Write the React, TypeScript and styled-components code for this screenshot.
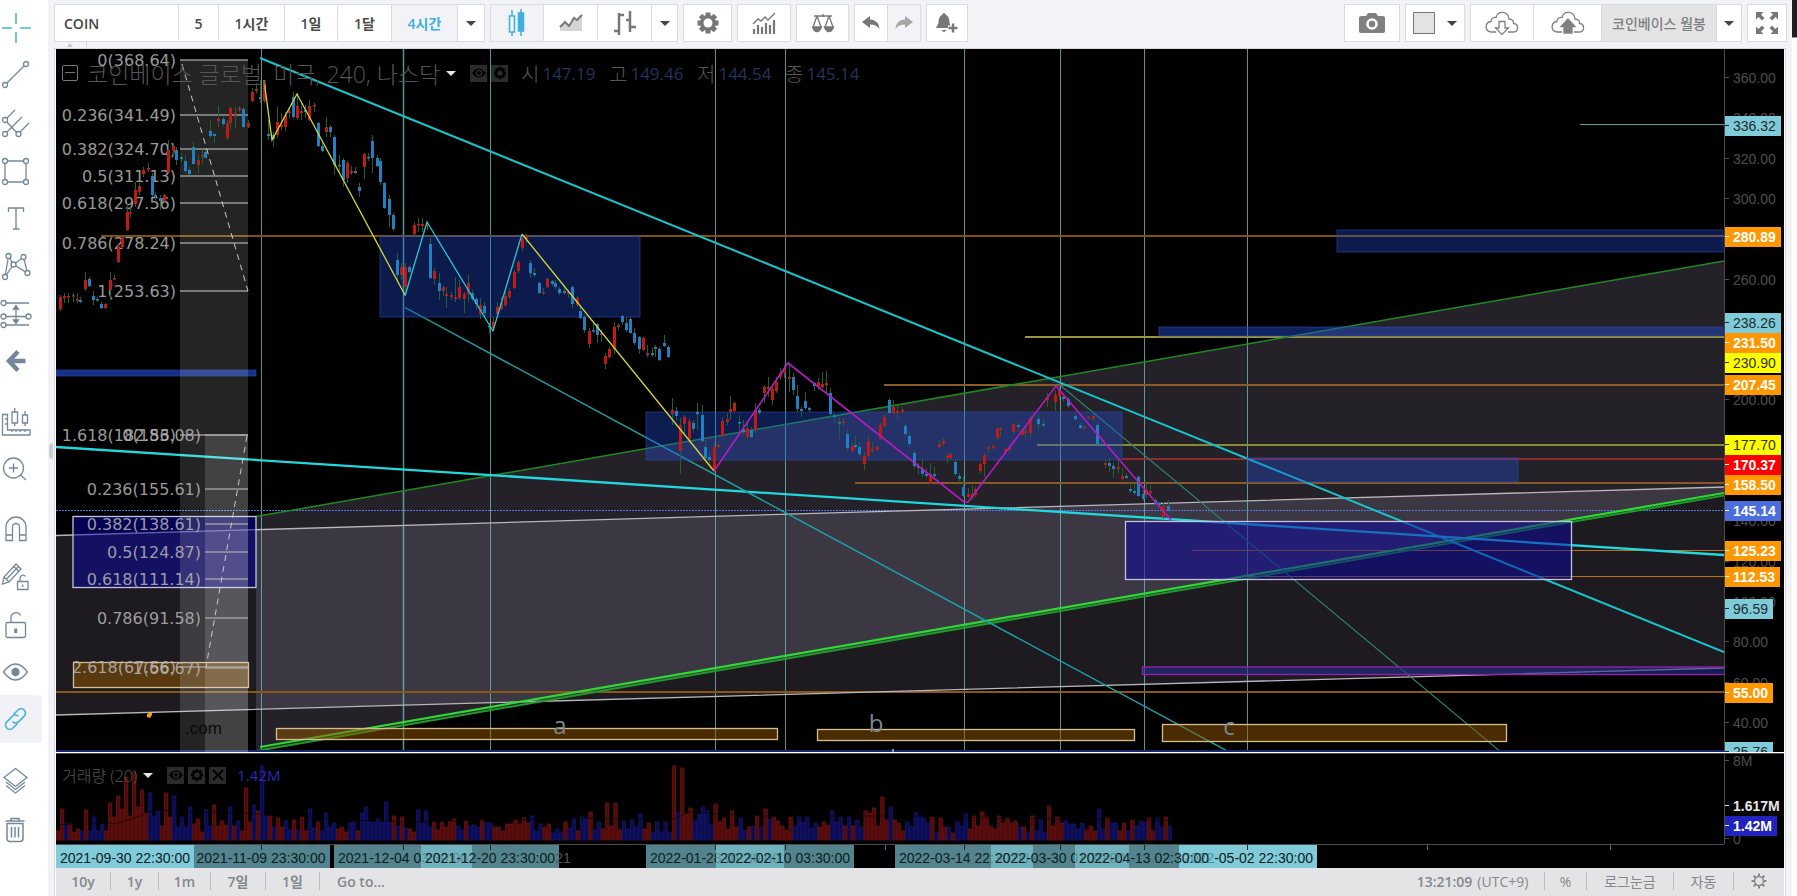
import React from "react";
import styled, { createGlobalStyle, css } from "styled-components";

const GlobalStyle = createGlobalStyle`
  *, *::before, *::after { box-sizing: border-box; }
  html, body, #root { height: 100%; }
  body {
    margin: 0;
    background: #f1f3f7;
    font-family: "Open Sans", "Noto Sans CJK KR", sans-serif;
    overflow: hidden;
  }
  button, input { font: inherit; color: inherit; margin: 0; }
`;

const Page = styled.div`
  display: flex;
  height: 100vh;
`;

/* ---------- left drawing tools ---------- */

const Sidebar = styled.nav`
  flex: none;
  width: 48px;
  padding-top: 4px;
  background: #fff;
  color: #74879a;
`;

const ToolGroup = styled.div<{ $height: number }>`
  display: flex;
  flex-direction: column;
  height: ${(p) => p.$height}px;
  & + & {
    margin-top: 13px;
    position: relative;
  }
  & + &::before {
    content: "";
    position: absolute;
    top: -7px;
    left: 0;
    width: 48px;
    height: 2px;
    background: #e3e8ee;
  }
`;

const ToolButton = styled.button<{ $active?: boolean; $blue?: boolean }>`
  flex: 1;
  display: flex;
  align-items: center;
  width: 42px;
  padding: 0;
  border: 0;
  border-radius: 0 3px 3px 0;
  background: ${(p) => (p.$active ? "#f0f2f5" : "transparent")};
  color: ${(p) => (p.$blue ? "#4cb4dc" : "inherit")};
  svg { display: block; width: 32px; height: 32px; }
`;

/* ---------- top toolbar ---------- */

const Main = styled.main`
  flex: 1;
  min-width: 0;
  display: flex;
  flex-direction: column;
  padding-left: 6px;
`;

const Toolbar = styled.header`
  flex: none;
  display: flex;
  align-items: center;
  gap: 5px;
  height: 42px;
  padding: 4px 5px 0 0;
`;

const Group = styled.div`
  display: flex;
  height: 38px;
  border: 1px solid #d9dbdf;
  background: #fff;
`;

const Spacer = styled.div`
  flex: 1;
`;

const SymbolInput = styled.input`
  width: 123px;
  border: 0;
  outline: 0;
  padding: 0 9px;
  font-size: 14px;
  font-weight: 600;
  color: #444;
  background: transparent;
`;

const BarButton = styled.button<{ $w: number; $active?: boolean; $muted?: boolean; $first?: boolean }>`
  width: ${(p) => p.$w}px;
  display: flex;
  align-items: center;
  justify-content: center;
  gap: 12px;
  padding: 0;
  border: 0;
  border-left: ${(p) => (p.$first ? 0 : "1px solid #d9dbdf")};
  background: ${(p) => (p.$muted ? "#e4e4e4" : p.$active ? "#f1f3f6" : "#fff")};
  color: ${(p) => (p.$active ? "#3faee0" : p.$muted ? "#808080" : "#4a4a4a")};
  font-size: 14px;
  font-weight: ${(p) => (p.$muted ? 500 : 600)};
  white-space: nowrap;
  svg { display: block; }
`;

const Caret = styled.span<{ $light?: boolean }>`
  width: 0;
  height: 0;
  border: 5px solid transparent;
  border-top-color: ${(p) => (p.$light ? "#e6e6e6" : "#444")};
  border-bottom: 0;
`;

const Swatch = styled.span`
  width: 22px;
  height: 22px;
  border: 1px solid #777;
  background: #e3e3e3;
`;

const Shelf = styled.div`
  flex: none;
  height: 7px;
  margin-right: 6px;
  border-bottom: 1px solid #d5d9de;
`;

const ShelfTab = styled.button`
  display: flex;
  align-items: center;
  justify-content: center;
  width: 33px;
  height: 6px;
  padding: 0;
  border: 0;
  border-right: 1px solid #d5d9de;
  background: transparent;
  &::before {
    content: "";
    border: 3px solid transparent;
    border-bottom: 4px solid #c5c8cc;
    border-top: 0;
  }
`;

/* ---------- chart ---------- */

const ChartFrame = styled.section`
  position: relative;
  flex: 1;
  min-height: 0;
  display: flex;
  flex-direction: column;
  margin-right: 6px;
  padding: 0 1px;
  border-left: 1px solid #d5d9de;
  border-right: 1px solid #d5d9de;
  background: #fff;
`;

const CollapseHandle = styled.button`
  position: absolute;
  left: -6px;
  top: 394px;
  width: 4px;
  height: 16px;
  padding: 0;
  border: 0;
  border-radius: 4px 0 0 4px;
  background: #c9ccd1;
`;

const PaneRow = styled.div<{ $height?: number }>`
  display: flex;
  min-height: 0;
  flex: ${(p) => (p.$height ? `0 0 ${p.$height}px` : "1 1 0")};
  background: #000;
`;

const Plot = styled.div`
  position: relative;
  flex: 1;
  min-width: 0;
  overflow: hidden;
  > svg { display: block; width: 100%; height: 100%; }
`;

const Divider = styled.div`
  flex: none;
  height: 2px;
  background: #fff;
  border-bottom: 1px solid #4c4c50;
`;

const Axis = styled.div`
  position: relative;
  flex: none;
  width: 60px;
  overflow: hidden;
  border-left: 1px solid #4a4a4a;
  font-family: "Liberation Sans", sans-serif;
  font-size: 14px;
  line-height: 20px;
`;

const AxisCorner = styled.div`
  flex: none;
  width: 60px;
`;

const AxisLabel = styled.div<{ $bg?: string; $fg: string; $bold?: boolean }>`
  position: absolute;
  left: -1px;
  height: 20px;
  margin-top: -10px;
  padding: 0 5px 0 9px;
  background: ${(p) => p.$bg || "transparent"};
  color: ${(p) => p.$fg};
  font-weight: ${(p) => (p.$bold ? 700 : 400)};
  &::before {
    content: "";
    position: absolute;
    left: 0;
    top: 9px;
    width: 5px;
    height: 1px;
    background: currentColor;
  }
`;

const Legend = styled.div<{ $top: number; $left: number }>`
  position: absolute;
  top: ${(p) => p.$top}px;
  left: ${(p) => p.$left}px;
  display: flex;
  align-items: center;
  height: 30px;
  white-space: nowrap;
  color: #565656;
`;

const CollapseBox = styled.button`
  position: relative;
  width: 16px;
  height: 16px;
  margin-right: 9px;
  padding: 0;
  border: 1px solid #777;
  border-radius: 2px;
  background: transparent;
  &::before {
    content: "";
    position: absolute;
    left: 2px;
    right: 2px;
    top: 6px;
    height: 1px;
    background: #777;
  }
`;

const LegendTitle = styled.span<{ $size: number }>`
  font-size: ${(p) => p.$size}px;
  font-weight: 300;
  margin-right: 6px;
`;

const LegendButton = styled.button`
  display: grid;
  place-items: center;
  width: 17px;
  height: 17px;
  margin-right: 4px;
  padding: 0;
  border: 0;
  background: #2b2b2b;
  color: #000;
`;

const LegendIcons = styled.div`
  display: flex;
  margin-left: 14px;
`;

const Quote = styled.span`
  display: flex;
  align-items: center;
  width: 88px;
  font-size: 20px;
  font-weight: 300;
  b {
    margin-left: 3px;
    font-size: 17px;
    font-weight: 400;
    color: #20345c;
  }
`;

const VolumeValue = styled.span`
  margin-left: 7px;
  font-size: 15px;
  color: #2a2ab4;
`;

const TimeTag = styled.span<{ $solid?: boolean }>`
  position: absolute;
  top: 0;
  width: 138px;
  height: 24px;
  transform: translateX(-50%);
  background: ${(p) => (p.$solid ? "#80cbd9" : "rgba(128, 203, 217, 0.65)")};
  color: #0b1c20;
  font-family: "Liberation Sans", sans-serif;
  font-size: 14px;
  line-height: 26px;
  text-align: center;
  white-space: nowrap;
`;

const TimeNote = styled(TimeTag)`
  width: auto;
  background: none;
  color: #555;
`;

const TimeTick = styled.i<{ $dark?: boolean }>`
  position: absolute;
  top: 0;
  width: 1px;
  height: 5px;
  background: ${(p) => (p.$dark ? "#12292c" : "#666")};
`;

const AxisRule = styled.div`
  flex: 1;
  position: relative;
  overflow: hidden;
  border-top: 1px solid #4d4d4d;
`;

/* ---------- footer ---------- */

const Footer = styled.footer`
  flex: none;
  display: flex;
  align-items: center;
  height: 28px;
  padding-bottom: 2px;
  background: #e4e4e6;
  color: #85888e;
  font-size: 14px;
`;

const FooterButton = styled.button<{ $w: number; $plain?: boolean; $last?: boolean }>`
  width: ${(p) => p.$w}px;
  height: 18px;
  padding: 0;
  display: flex;
  align-items: center;
  justify-content: center;
  gap: 5px;
  border: 0;
  background: transparent;
  white-space: nowrap;
  font-weight: ${(p) => (p.$plain ? 400 : 600)};
  ${(p) => !p.$last && css`border-right: 1px solid #b9bbc0;`}
  span { font-weight: 400; }
`;

/* the neighbouring panel that peeks in on the right */
const EdgeStrip = styled.aside`
  flex: none;
  width: 5px;
  background: #fff;
  &::before {
    content: "";
    display: block;
    height: 38px;
    background: #1d1f22;
    border-bottom: 1px solid #999;
  }
`;

/* ---------- data ---------- */

const CANDLES = `
60 295 297 309 311 r;64 293 296 298 303 r;68 293 296 297 303 r;73 293 295 296 302 r;77 293 299 301 303 r;80 297 300 302 303 b;
85 272 280 289 291 r;89 277 279 286 287 b;93 291 296 300 305 b;97 297 299 300 302 b;101 302 304 308 309 b;105 303 304 308 309 r;
110 272 280 290 300 r;114 275 278 279 280 r;118 244 246 262 263 r;122 235 237 247 248 r;127 203 212 230 231 r;130 207 212 213 217 r;
135 182 190 204 207 r;139 183 186 192 195 r;143 167 170 174 177 r;148 163 168 170 172 r;152 173 176 195 197 b;155 192 195 197 202 b;
160 195 198 201 210 b;164 194 195 201 203 r;168 140 150 173 174 r;173 143 146 151 155 r;176 147 150 160 165 b;181 153 157 159 162 b;
185 155 161 171 173 b;189 167 170 174 175 b;193 142 147 164 165 b;198 155 160 165 173 r;202 150 155 156 164 r;205 150 152 158 158 b;
210 120 131 136 138 b;214 133 134 136 143 b;218 106 119 121 127 r;223 117 119 124 126 b;227 120 123 138 140 r;230 107 108 123 129 r;
235 107 113 114 128 r;239 106 108 110 112 r;243 107 109 127 128 b;248 120 123 127 128 r;252 88 92 101 102 r;256 83 89 91 93 r;
260 80 97 99 103 b;264 80 82 101 103 r;268 120 134 136 140 b;273 132 135 139 147 b;277 107 122 135 138 r;281 113 125 127 130 r;
285 112 115 127 131 r;289 107 111 113 118 r;293 92 97 117 118 b;297 93 106 118 120 r;301 103 111 113 120 r;305 105 110 112 118 b;
309 100 106 120 121 r;314 103 105 106 112 r;318 122 123 146 147 b;322 140 146 151 152 b;326 117 127 132 137 r;330 125 127 132 137 b;
334 135 137 165 175 b;339 155 165 166 173 b;343 158 160 180 187 b;347 161 163 178 183 r;351 166 171 173 175 r;355 167 171 173 174 b;
359 183 187 191 197 b;364 153 154 167 179 r;368 153 157 158 161 b;372 135 141 158 173 b;377 155 158 166 167 b;380 158 161 182 185 b;
384 182 183 208 209 b;389 195 199 215 227 b;393 213 215 229 231 b;397 253 260 275 280 b;401 263 267 275 280 r;405 263 267 287 292 r;
409 265 267 272 273 b;414 222 225 234 237 r;418 218 224 225 232 r;422 218 224 226 232 r;427 222 224 226 230 r;430 238 244 278 279 b;
434 268 271 279 285 r;439 273 283 291 300 b;443 285 287 291 296 r;446 287 294 296 308 r;451 292 295 297 300 r;455 277 297 299 302 r;
459 280 287 298 300 r;464 292 294 299 313 r;468 275 283 294 302 r;472 290 293 299 301 b;476 297 299 304 310 b;480 298 305 314 319 r;
484 302 306 313 317 b;489 323 326 327 334 b;493 317 322 328 330 r;497 302 307 314 316 r;501 297 303 309 310 r;505 292 296 305 307 r;
509 288 291 297 299 r;514 270 272 288 289 r;518 260 262 271 273 r;522 237 239 248 251 r;526 234 236 239 243 r;530 260 263 273 278 b;
534 268 273 275 277 b;539 282 283 293 294 b;543 288 292 293 295 r;547 278 279 287 288 r;552 280 281 284 286 b;555 280 283 287 289 b;
559 287 289 293 295 b;564 287 291 293 295 b;568 290 292 294 298 r;572 285 287 304 308 b;577 296 298 305 307 r;580 305 311 318 319 b;
584 315 317 330 333 b;589 328 331 344 348 r;593 323 330 331 333 b;597 323 324 335 343 b;601 330 333 335 342 r;605 353 356 364 369 r;
609 347 349 357 358 r;614 322 327 349 354 r;618 323 325 327 330 r;622 315 316 322 325 b;626 317 323 330 332 b;630 317 319 333 334 b;
634 328 333 343 345 b;639 336 337 349 354 b;643 337 338 350 351 r;647 345 353 355 357 r;652 348 353 355 357 b;655 345 347 349 357 b;
659 347 349 360 361 b;664 335 343 346 347 b;668 345 347 357 358 b;672 398 410 414 425 r;676 407 411 416 420 b;680 418 425 451 474 r;
684 415 417 424 433 r;689 418 421 439 443 r;693 420 423 429 433 b;697 403 412 414 430 b;702 405 415 441 443 b;705 440 447 458 460 b;
709 453 457 460 463 b;714 443 447 471 473 r;718 443 445 447 448 r;722 417 421 436 437 r;727 413 419 422 425 r;730 396 409 412 420 r;
734 402 403 411 413 r;739 415 422 423 432 b;743 420 429 432 435 b;747 422 428 437 439 r;751 427 430 437 438 b;755 403 410 430 433 r;
759 408 410 413 415 b;764 385 387 393 403 r;768 377 387 389 397 r;772 385 389 400 405 r;776 377 382 391 393 r;780 368 373 377 380 r;
784 365 369 373 378 r;789 363 377 379 392 r;793 373 377 390 395 b;797 385 396 409 412 b;801 407 409 411 417 b;805 392 401 408 410 b;
809 407 408 410 412 b;814 382 383 386 391 b;818 378 382 386 390 r;822 372 384 387 388 r;826 371 383 385 393 r;830 388 393 414 417 b;
834 413 415 417 422 b;839 417 422 423 439 b;843 418 421 423 427 r;847 430 434 448 452 b;852 442 446 451 453 r;855 435 445 447 449 b;
859 443 447 454 456 b;864 453 456 464 470 r;868 435 441 456 457 r;872 442 449 451 453 r;877 445 447 450 451 r;880 423 425 439 440 r;
884 415 417 426 427 r;889 398 400 413 414 b;893 400 407 413 414 r;897 405 411 413 419 r;902 407 410 412 413 r;905 423 426 434 436 b;
909 432 436 444 446 b;914 450 453 466 468 b;918 463 466 468 475 b;922 458 469 474 477 b;926 468 474 476 478 b;930 463 474 483 484 r;
934 467 474 476 477 b;939 440 444 447 448 r;943 438 441 444 446 r;947 453 456 458 463 r;950 453 454 458 460 r;955 460 462 474 476 b;
959 473 476 479 481 b;963 476 487 496 497 b;968 488 494 497 498 r;972 485 494 497 500 r;975 487 489 495 497 r;980 462 464 471 473 r;
984 453 455 464 477 r;988 445 447 449 453 r;993 444 446 448 450 r;997 426 429 438 440 r;1000 427 428 430 437 r;1005 447 449 452 452 r;
1009 445 447 450 453 r;1013 423 424 432 434 r;1018 422 425 427 432 b;1022 428 430 435 436 r;1025 425 431 433 438 r;1030 415 418 433 439 r;
1038 415 419 424 430 b;1043 418 424 425 427 b;1047 393 398 400 407 r;1055 390 395 402 411 r;1059 386 390 396 400 r;1063 395 397 399 401 b;
1068 397 399 406 408 b;1075 414 416 419 421 b;1080 423 425 428 429 b;1084 425 427 428 429 r;1088 416 417 418 419 r;1093 414 416 419 421 r;
1097 423 425 444 445 b;1101 440 444 445 447 b;1105 460 463 465 468 r;1109 458 463 466 472 b;1113 463 466 469 478 b;1118 460 467 469 473 r;
1122 468 476 479 481 r;1126 473 476 478 479 b;1130 483 489 491 493 b;1134 483 491 493 495 b;1138 475 477 496 497 b;1143 490 494 499 501 b;
1146 483 490 495 498 r;1150 485 491 493 495 r;1155 498 500 504 505 b;1159 502 503 505 507 b;1163 502 506 517 519 r;1168 500 506 511 512 b`
  .trim()
  .split(";")
  .map((row) => {
    const [x, high, top, bottom, low, tone] = row.trim().split(" ");
    return { x: +x, high: +high, top: +top, bottom: +bottom, low: +low, up: tone === "r" };
  });

const VOLUME_Q4 =
  "r9 r31 b16 r16 r8 r11 b9 r30 b9 b23 b9 b16 r9 r37 r23 r44 r31 r63 r24 r68 r33 r50 r27 b47 b24 b29 r14 r47 r23 b44 b13 b23 b13 b33 r16 r21 r8 b30 b14 r35 r14 r19 r15 b33 r14 b19 r9 r52 r18 b35 r29 b74 b24 r24 b13 r22 r13 b19 b10 r20 b10 r23 r9 b31 b12 r18 b9 b27 b13 b17 r11 r13 r8 b17 b18 r9 b27 b33 b18 b18 b21 b18 b38 b18 r24 b14 r23 b12 r11 r8 b30 b17 b29 b13 r18 r10 r18 r13 r19 r21 b14 b10 r19 b14 b15 b13".split(" ");

const VOLUME_Q1 =
  "r20 b17 b17 r13 r13 r9 r16 r16 r20 r16 r22 r17 b24 b9 b16 r13 r16 b7 b11 b8 r18 b12 b22 r9 b23 b22 r28 b10 b18 r11 r37 r14 r37 r10 b19 b11 b21 b13 b26 r11 r17 b8 b18 b8 b18 b8 r74 b27 r72 r26 r32 b19 b26 b33 b29 b16 r36 r18 r22 r11 r29 r13 b22 b10 r13 b14 r24 b13 r31 b21 r23 r19 r14 r10 r23 b14 b24 b18 b23 b12 b17 r13 r18 r15 b29 b18 b23 r14 b23 r14 b20 b13 r29 r27 r32 r14 r43 r20 b33 r20 r17 r9 b18 b14 b27 b24 b22 b17 r23 b8 r22 r13 b13 r7 b18 b14 b26 r11 r24 r14 r28 r23 r14 r11 r24 r17 r22 r17 r19 b13 r13 b8 r24 b9 b20 b8 r34 r14 r23 r17 b19 b16 b16 b11 b17 r10 r14 r9 b31 b11 r22 b17 b17 r9 r17 b9 r20 b14 b19 b18 r22 r9 b22 b13 r23 b14".split(" ");

type Bar = { x: number; h: number; up: boolean };
const spread = (list: string[], from: number, to: number): Bar[] =>
  list.map((v, i) => ({
    x: from + ((to - from) * i) / list.length,
    h: +v.slice(1),
    up: v[0] === "r",
  }));
const BARS = [...spread(VOLUME_Q4, 56, 480), ...spread(VOLUME_Q1, 480, 1172)];

const FIB_MAJOR: [string, number][] = [
  ["0(368.64)", 60], ["0.236(341.49)", 115], ["0.382(324.70)", 149], ["0.5(311.13)", 176],
  ["0.618(297.56)", 203], ["0.786(278.24)", 243], ["1(253.63)", 291], ["1.618(182.56)", 435], ["2.618(67.56)", 667],
];
const FIB_MINOR: [string, number][] = [
  ["0(183.08)", 435], ["0.236(155.61)", 489], ["0.382(138.61)", 524], ["0.5(124.87)", 552],
  ["0.618(111.14)", 579], ["0.786(91.58)", 618], ["1(66.67)", 668],
];

const VERTICALS = [261, 403, 490, 715, 785, 964, 1060, 1144, 1247];

const LEVELS: { x: number; y: number; color: string; w: number }[] = [
  { x: 1580, y: 124.5, color: "#5b9ca5", w: 1 },
  { x: 101, y: 236, color: "#80500f", w: 2 },
  { x: 1025, y: 337, color: "#9a943a", w: 2 },
  { x: 884, y: 385, color: "#8b5c26", w: 2 },
  { x: 1037, y: 445, color: "#8a8a35", w: 2 },
  { x: 1122, y: 459, color: "#8f2a30", w: 2 },
  { x: 855, y: 483, color: "#87592a", w: 2 },
  { x: 1192, y: 550.5, color: "#b8741a", w: 1 },
  { x: 1240, y: 576.5, color: "#b8741a", w: 1 },
  { x: 56, y: 692, color: "#8c5614", w: 2 },
];

/* x, y, width, height, opacity */
const NAVY_ZONES = [
  [56, 370, 200, 6, 0.6], [380, 236, 260, 81, 0.34], [646, 412, 476, 48, 0.36], [1337, 230, 386, 22, 0.34],
  [1159, 327, 564, 9, 0.44], [1247, 458, 271, 24, 0.34],
];

const BROWN_ZONES = [
  [73, 662, 175, 25], [276, 728, 501, 11], [817, 729, 317, 11], [1162, 724, 344, 17],
];

const PX_PER_UNIT = 2.0156;
const priceTop = (price: number) => Math.round(29 + (360 - price) * PX_PER_UNIT);
const GRID_PRICES = [360, 340, 320, 300, 280, 260, 240, 220, 200, 180, 160, 140, 120, 100, 80, 60, 40];

const ORANGE = "#ff9800";
const AQUA = "#80cbd9";
const TAGS: [number, string, string, boolean][] = [
  [336.32, AQUA, "#1c2b2e", false], [280.89, ORANGE, "#fff", true], [238.26, AQUA, "#1c2b2e", false],
  [231.5, ORANGE, "#fff", true], [230.9, "#ffff00", "#33330a", false], [207.45, ORANGE, "#fff", true],
  [177.7, "#ffff00", "#33330a", false], [170.37, "#ff0000", "#fff", true], [158.5, ORANGE, "#fff", true],
  [145.14, "#4a6ee0", "#fff", true], [125.23, ORANGE, "#fff", true], [112.53, ORANGE, "#fff", true],
  [96.59, AQUA, "#1c2b2e", false], [55, ORANGE, "#fff", true], [25.76, AQUA, "#1c2b2e", false],
];

/* neighbouring tags push each other down so that they never overlap */
let lastTop = -100;
const PLACED_TAGS = TAGS.map(([price, bg, fg, bold]) => {
  const top = Math.max(priceTop(price), lastTop + 20);
  lastTop = top;
  return { price, bg, fg, bold, top };
});

/* the solid end marks come first, so that the translucent ones lie over them */
const TIMES: [number, string, boolean][] = [
  [125, "2021-09-30 22:30:00", true], [1248, "2022-05-02 22:30:00", true],
  [261, "2021-11-09 23:30:00", false], [403, "2021-12-04 03:30:00", false],
  [490, "2021-12-20 23:30:00", false], [715, "2022-01-28 01:30:00", false], [785, "2022-02-10 03:30:00", false],
  [964, "2022-03-14 22:30:00", false], [1060, "2022-03-30 01:30:00", false], [1144, "2022-04-13 02:30:00", false],
];
const timeLeft = (x: number) => ({ left: `${((x - 56) / 1668) * 100}%` });

/* ---------- icons ---------- */

const Line = ({ children, width = 1.3 }: { children: React.ReactNode; width?: number }) => (
  <svg viewBox="0 0 32 32" fill="none" stroke="currentColor" strokeWidth={width} aria-hidden="true">{children}</svg>
);
const Dots = ({ at, r = 2.5 }: { at: [number, number][]; r?: number }) => (
  <>{at.map(([x, y]) => <circle key={`${x}-${y}`} cx={x} cy={y} r={r} fill="#fff" />)}</>
);

const GearShape = ({ size, color = "currentColor", hole }: { size: number; color?: string; hole: string }) => (
  <svg width={size} height={size} viewBox="0 0 24 24" aria-hidden="true">
    {[0, 45, 90, 135, 180, 225, 270, 315].map((a) => (
      <rect key={a} x="9.5" y="1.5" width="5" height="6" fill={color} transform={`rotate(${a} 12 12)`} />
    ))}
    <circle cx="12" cy="12" r="8" fill={color} />
    <circle cx="12" cy="12" r="4.500" fill={hole} />
  </svg>
);
const EyeShape = () => (
  <svg width="14" height="10" viewBox="0 0 14 10" aria-hidden="true">
    <path d="M0 5Q7-4 14 5Q7 14 0 5z" fill="#000" />
    <circle cx="7" cy="5" r="2.6" fill="none" stroke="#333" strokeWidth="1.2" />
  </svg>
);

const TOOLS: { label: string; icon: React.ReactNode; blue?: boolean; active?: boolean }[][] = [
  [
    { label: "Cross", blue: true, icon: <Line width={1.6}><path d="M16 1v11M16 20v11M2 16h10M20 16h11" /></Line> },
    { label: "Trend line", icon: <Line><path d="M6.5 24.5L24.5 6.5" /><Dots at={[[26, 5], [5, 26]]} /></Line> },
    { label: "Pitchfork", icon: <Line><path d="M6 12L15 3M6 26L22 10M19 26L29 16M6 14L17 26" /><Dots at={[[5, 13], [5, 27], [18.5, 27]]} /></Line> },
    { label: "Rectangle", icon: <Line><path d="M5 6H26V27H5z" /><Dots at={[[5, 6], [26, 6], [5, 27], [26, 27]]} /></Line> },
    { label: "Text", icon: <Line><path d="M8.5 10V6H23.500V10M16 6V27M13 27H19.500" /></Line> },
    { label: "Patterns", icon: <Line><path d="M5 27L8.500 6L13.500 14.500L23.500 7L27.500 23L13.500 14.500z" /><Dots at={[[8.5, 6], [23.5, 7], [13.5, 14.5], [5, 27], [27.5, 23]]} /></Line> },
    { label: "Forecast", icon: <Line><path d="M4 5H29M4 18.500H27M4 27H29M16 9V24" /><path d="M13.500 11L16 7.500L18.500 11zM13.500 22L16 25.500L18.500 22z" fill="currentColor" /><Dots at={[[3.5, 5], [3.5, 18.5], [28.5, 18.5], [3.5, 27]]} /></Line> },
    { label: "Back", icon: <Line width={4.5}><path d="M18 6.500L9 16L18 25.500M9 16H25.500" /></Line> },
  ],
  [
    { label: "Measure", icon: <Line><path d="M2.500 8.500H7.500V24H30V29H2.500zM5 13H7.500M5 18H7.500M12 26V24M16 26V24M20 26V24M25 26V24M12 6H17.500V17H12zM14.700 2V6M14.700 17V20M22.500 9H27.500V17H22.500zM25 5V9M25 17V20" /></Line> },
    { label: "Zoom in", icon: <Line><circle cx="13.500" cy="15" r="10" /><path d="M9 15H18M13.500 10.500V19.500M20.500 22L26 27" /></Line> },
  ],
  [
    { label: "Magnet", icon: <Line><path d="M6 27.500V14a10 10 0 0 1 20 0V27.500H19.500V14a3.500 3.500 0 0 0-7 0V27.500zM6 22H12.500M19.500 22H26" /></Line> },
    { label: "Stay in drawing mode", icon: <Line><path d="M2.500 24L4 17L16 4L21 9L9 22zM4 17L9 22M6.500 19L18.500 6.500M14 6.500L19 11.500" /><path d="M17.500 21.500H28V29.500H17.500zM20 21.500V18a3 3 0 0 1 5.500-1.500M22.700 24.500V27" fill="#fff" /></Line> },
    { label: "Lock all", icon: <Line><rect x="6" y="14.500" width="19.500" height="15" rx="1.500" /><path d="M11 14.500V9.500a5 5 0 0 1 9.500-2" /><path d="M15.700 20.500V25" strokeWidth="3" /></Line> },
    { label: "Hide all", icon: <Line><path d="M3.500 16Q15.500 0 27.500 16Q15.500 32 3.500 16z" /><circle cx="15.500" cy="16" r="3.500" fill="currentColor" /></Line> },
    { label: "Link", blue: true, active: true, icon: <Line width={1.7}><path d="M13.500 11.500L18 7a4.300 4.300 0 0 1 6.200 6.200L18.700 18.700a4.300 4.300 0 0 1-6.200 0M17.500 20.500L13 25a4.300 4.300 0 0 1-6.200-6.200L12.300 13.300a4.300 4.300 0 0 1 6.200 0" /></Line> },
  ],
  [
    { label: "Object tree", icon: <Line><path d="M15.500 3.500L27 12.500L15.500 21.500L4 12.500zM6 17L15.500 24.500L25 17M6 20.500L15.500 28L25 20.500" /></Line> },
    { label: "Remove", icon: <Line width={1.5}><path d="M5.500 7H24.500M11 7V4.500H19V7M7 9.500H23V24.500a3 3 0 0 1-3 3H10a3 3 0 0 1-3-3zM11.500 13V23.500M15 13V23.500M18.500 13V23.500" /></Line> },
  ],
];

const CandlesIcon = () => (
  <svg width="18" height="30" viewBox="0 0 18 30" stroke="#3faee0" strokeWidth="1.500" aria-hidden="true">
    <path d="M4 2V8M4 24V28M13 1V28" /><rect x="1.500" y="8" width="5" height="16" fill="none" /><rect x="10.500" y="5" width="5" height="18" fill="#3faee0" />
  </svg>
);
const AreaIcon = () => (
  <svg width="24" height="18" viewBox="0 0 24 18" aria-hidden="true">
    <path d="M1 13L6 9L10 12L15 5L19 6L23 2V17H1z" fill="#d4d4d4" /><path d="M1 13L6 8L10 12L15 4L18 6L23 1" fill="none" stroke="#777" strokeWidth="2" />
  </svg>
);
const HlcIcon = () => (
  <svg width="24" height="24" viewBox="0 0 24 24" stroke="#777" strokeWidth="2.500" fill="none" aria-hidden="true">
    <path d="M1 20H6M6 2V24M6 4H11M13 9H17M17 0V21M17 16H23" />
  </svg>
);
const IndicatorsIcon = () => (
  <svg width="24" height="22" viewBox="0 0 24 22" aria-hidden="true">
    <path d="M1 12L6 7L9 9L13 5L16 8L23 1" fill="none" stroke="#777" strokeWidth="1.400" />
    <path d="M2 22V17M6 22V13M10 22V15M14 22V11M18 22V13M22 22V8" stroke="#777" strokeWidth="2.200" />
  </svg>
);
const ScaleIcon = () => (
  <svg width="24" height="20" viewBox="0 0 24 20" fill="none" stroke="#777" strokeWidth="1.300" aria-hidden="true">
    <path d="M3 3H21M12 1V4M6 3L2 14M6 3L10 14M18 3L14 14M18 3L22 14" /><path d="M1.500 14H10.500Q9 18.500 6 18.500T1.500 14zM13.500 14H22.500Q21 18.500 18 18.500T13.500 14z" fill="#777" />
  </svg>
);
const UndoIcon = ({ flip, color }: { flip?: boolean; color: string }) => (
  <svg width="18" height="14" viewBox="0 0 18 14" aria-hidden="true">
    <path transform={flip ? "matrix(-1 0 0 1 18 0)" : undefined} d="M0 6L8 0V3.500C14 4 17 7 17.500 13C15 9.500 12 8.500 8 8.500V12z" fill={color} />
  </svg>
);
const BellIcon = () => (
  <svg width="24" height="22" viewBox="0 0 24 22" fill="#777" aria-hidden="true">
    <path d="M9 1a1.500 1.500 0 0 1 1.500 1.500C14 4 14.500 8 14.500 11L17 16H1L3.500 11C3.500 8 4 4 7.500 2.500A1.500 1.500 0 0 1 9 1zM6.500 18H11.500Q9 22 6.500 18z" />
    <path d="M18 11V21M13 16H23" stroke="#fff" strokeWidth="5" /><path d="M18 11.500V20.500M13.500 16H22.500" stroke="#777" strokeWidth="2.400" />
  </svg>
);
const CameraIcon = () => (
  <svg width="26" height="20" viewBox="0 0 26 20" aria-hidden="true">
    <path d="M2 3H7L9 0H17L19 3H24a2 2 0 0 1 2 2V18a2 2 0 0 1-2 2H2a2 2 0 0 1-2-2V5a2 2 0 0 1 2-2z" fill="#808080" />
    <circle cx="13" cy="11" r="4.500" fill="none" stroke="#fff" strokeWidth="2.500" />
  </svg>
);
const CloudIcon = ({ up }: { up?: boolean }) => (
  <svg width="34" height="24" viewBox="0 0 34 24" fill="none" stroke="#808080" strokeWidth="1.300" aria-hidden="true">
    <path d="M11 21H6C-1 20 0 11 6 10.500C6 7 9 6 11 6.500C13-1 23 0 24 8C27 8 29 10 28.500 12.500C34 13 34 21 28 21H23" />
    {up ? <path d="M13 22V15.500H10L17 8L24 15.500H21V22z" fill="#808080" /> : <path d="M14 10.500H20V17H23.500L17 23.500L10.500 17H14z" fill="#fff" />}
  </svg>
);
const ExpandIcon = () => (
  <svg width="24" height="24" viewBox="0 0 24 24" fill="#777" aria-hidden="true">
    {[0, 90, 180, 270].map((a) => <path key={a} transform={`rotate(${a} 12 12)`} d="M1 1H8.500L6 3.500L9.500 7L7 9.500L3.500 6L1 8.500z" />)}
  </svg>
);
const SunGearIcon = () => (
  <svg width="16" height="16" viewBox="0 0 16 16" fill="none" stroke="#85888e" strokeWidth="1.500" aria-hidden="true">
    <circle cx="8" cy="8" r="4.500" />
    {[0, 45, 90, 135, 180, 225, 270, 315].map((a) => <path key={a} d="M8 3.500V.5" strokeWidth="2" transform={`rotate(${a} 8 8)`} />)}
  </svg>
);

/* ---------- parts ---------- */

const Fib = ({ levels, x, textX }: { levels: [string, number][]; x: number; textX: number }) => (
  <g>
    <rect x={x} y={levels[0][1]} width={248 - x} height={752 - levels[0][1]} fill="#fff" fillOpacity="0.14" />
    {levels.map(([label, y]) => (
      <g key={label} opacity="0.85">
        <path d={`M${x} ${y}H248`} stroke="#aaa" strokeWidth="1.500" />
        <text x={textX} y={y + 6} textAnchor="end" fontSize="16" fontFamily="DejaVu Sans, sans-serif" fill="#b4b4b4">{label}</text>
      </g>
    ))}
  </g>
);

const PricePlot = () => (
  <svg viewBox="56 49 1668 703" role="img" aria-label="COIN 240">
    <path d="M56 535.500L1724 487V668L56 715z" fill="rgb(200,185,220)" fillOpacity="0.145" />
    <path d="M256 516.500L1724 261V493L256 752z" fill="rgb(200,185,230)" fillOpacity="0.18" />
    {VERTICALS.map((x) => <path key={x} d={`M${x + 0.5} 49V752`} stroke="#6fb6ba" strokeOpacity="0.8" strokeWidth={x === 403 ? 1.5 : 1} />)}

    {LEVELS.map((l) => <path key={l.y} d={`M${l.x} ${l.y}H1724`} stroke={l.color} strokeWidth={l.w} />)}
    <path d="M56 510.500H1724" stroke="#5878ea" strokeDasharray="2 1" />

    <path d="M56 535.500L1724 487M56 715L1724 668" stroke="#b9b5bd" strokeWidth="1.300" />
    <path d="M256 516.500L1724 261" stroke="#1f8a22" strokeWidth="1.500" />
    <path d="M256 751L1724 495.500" stroke="#1e9a28" strokeWidth="2" />
    <path d="M260 747L1724 493" stroke="#30d836" strokeWidth="2.200" />
    <path d="M260 58L1724 652" stroke="#17c4ca" strokeWidth="2" />
    <path d="M56 447L1724 555" stroke="#22d8dc" strokeWidth="2.300" />
    <path d="M405 307.500L1231 753" stroke="#1ea3a8" strokeWidth="1.400" />
    <path d="M1060 385L1502 753" stroke="#2b8274" strokeWidth="1.200" />

    {NAVY_ZONES.map(([x, y, w, h, alpha]) => (
      <rect key={`${x}-${y}`} x={x} y={y} width={w} height={h} fill="#2450dc" fillOpacity={alpha} stroke="#2a4ab0" strokeOpacity="0.6" />
    ))}
    {[[73, 516.5, 183, 71], [1125.5, 521.500, 446, 58]].map(([x, y, w, h]) => (
      <rect key={x} x={x} y={y} width={w} height={h} fill="#0c06a4" fillOpacity="0.5" stroke="#c4c2e0" strokeWidth="1.300" />
    ))}
    <rect x="1142.500" y="667" width="590" height="7.500" fill="#20308c" fillOpacity="0.6" stroke="#9a1fae" strokeWidth="1.300" />
    {BROWN_ZONES.map(([x, y, w, h]) => (
      <rect key={x} x={x + 0.5} y={y + 0.5} width={w} height={h} fill="#945800" fillOpacity="0.5" stroke="#d6bb94" strokeWidth="1.300" />
    ))}
    <rect x="56" y="750" width="1668" height="3" fill="#14296f" />
    <path d="M893 752V749" stroke="#8a8f9a" strokeWidth="2" />

    <Fib levels={FIB_MAJOR} x={180} textX={176} />
    <Fib levels={FIB_MINOR} x={205} textX={201} />
    <text x="185" y="734" fontSize="17" fontFamily="Liberation Sans, sans-serif" fill="#0a0a0a">.com</text>
    <path d="M182 64L248 291M247 436L206 667" stroke="#c9c9c9" strokeDasharray="6 5" fill="none" />
    <path d="M147 717V714L149 713H152V715L150 718z" fill="#ff9d0a" />

    {CANDLES.map((c) => (
      <g key={c.x}>
        <path d={`M${c.x + 0.5} ${c.high}V${c.low}`} stroke="#23602f" strokeWidth="1" />
        <rect x={c.x - 1} y={c.top} width="3" height={Math.max(1.5, c.bottom - c.top)} fill={c.up ? "#c01a13" : "#2180c4"} />
      </g>
    ))}

    <g fill="none" strokeWidth="1.300">
      <path d="M264 80L272 140L297 94L405 295M522 234L714 471" stroke="#d8d83a" />
      <path d="M405 296L427 222L493 331L522 234" stroke="#28c8d8" />
      <path d="M714 471L788 363L964 502L968 502L1056 386L1171 520" stroke="#b41cc0" strokeWidth="1.600" />
    </g>

    <g fontSize="24" fontFamily="Open Sans, sans-serif" fill="#7b8790" textAnchor="middle">
      <text x="560" y="734">a</text>
      <text x="876" y="732">b</text>
      <text x="1229" y="735">c</text>
    </g>
  </svg>
);

const VolumePlot = () => (
  <svg viewBox="56 754 1668 90" role="img" aria-label="Volume">
    {BARS.map((b) => (
      <rect key={b.x} x={b.x + 0.4} y={840 - b.h} width="3.500" height={b.h} fill={b.up ? "#500c0c" : "#0c0c50"} stroke={b.up ? "#701212" : "#161674"} strokeWidth="0.700" />
    ))}
    <path d="M56 825L120 823L155 810L200 812L270 814L340 820L420 822L500 820L600 818L670 820L690 812L760 816L900 816L1000 818L1170 820" fill="none" stroke="#000" strokeOpacity="0.5" />
  </svg>
);

export default function App() {
  return (
    <Page>
      <GlobalStyle />
      <Sidebar aria-label="Drawing tools">
        {TOOLS.map((group, i) => (
          <ToolGroup key={i} $height={[381, 94, 238, 98][i]}>
            {group.map((t) => (
              <ToolButton key={t.label} aria-label={t.label} $blue={t.blue} $active={t.active}>{t.icon}</ToolButton>
            ))}
          </ToolGroup>
        ))}
      </Sidebar>

      <Main>
        <Toolbar>
          <Group>
            <SymbolInput aria-label="Symbol" defaultValue="COIN" />
            <BarButton $w={40}>5</BarButton>
            <BarButton $w={66}>1시간</BarButton>
            <BarButton $w={53}>1일</BarButton>
            <BarButton $w={54}>1달</BarButton>
            <BarButton $w={66} $active>4시간</BarButton>
            <BarButton $w={27} aria-label="More intervals"><Caret /></BarButton>
          </Group>
          <Group>
            <BarButton $w={52} $first $active aria-label="Candles"><CandlesIcon /></BarButton>
            <BarButton $w={54} aria-label="Area"><AreaIcon /></BarButton>
            <BarButton $w={54} aria-label="Bars"><HlcIcon /></BarButton>
            <BarButton $w={26} aria-label="More styles"><Caret /></BarButton>
          </Group>
          <Group><BarButton $w={47} $first aria-label="Settings"><GearShape size={24} color="#777" hole="#fff" /></BarButton></Group>
          <Group><BarButton $w={52} $first aria-label="Indicators"><IndicatorsIcon /></BarButton></Group>
          <Group><BarButton $w={51} $first aria-label="Compare"><ScaleIcon /></BarButton></Group>
          <Group>
            <BarButton $w={32} $first aria-label="Undo"><UndoIcon color="#777" /></BarButton>
            <BarButton $w={33} $active aria-label="Redo"><UndoIcon flip color="#a8a8a8" /></BarButton>
          </Group>
          <Group><BarButton $w={40} $first aria-label="Add alert"><BellIcon /></BarButton></Group>
          <Spacer />
          <Group><BarButton $w={54} $first aria-label="Snapshot"><CameraIcon /></BarButton></Group>
          <Group><BarButton $w={58} $first aria-label="Layout"><Swatch /><Caret /></BarButton></Group>
          <Group>
            <BarButton $w={62} $first aria-label="Load"><CloudIcon /></BarButton>
            <BarButton $w={68} aria-label="Save"><CloudIcon up /></BarButton>
            <BarButton $w={115} $muted>코인베이스 월봉</BarButton>
            <BarButton $w={25} aria-label="Charts"><Caret /></BarButton>
          </Group>
          <Group><BarButton $w={38} $first aria-label="Full screen"><ExpandIcon /></BarButton></Group>
        </Toolbar>

        <Shelf><ShelfTab aria-label="Hide toolbar" /></Shelf>

        <ChartFrame>
          <CollapseHandle aria-label="Hide drawing tools" />
          <PaneRow>
            <Plot>
              <PricePlot />
              <Legend $top={9} $left={6}>
                <CollapseBox aria-label="Collapse legend" />
                <LegendTitle $size={23}>코인베이스 글로벌, 미국, 240, 나스닥</LegendTitle>
                <Caret $light />
                <LegendIcons>
                  <LegendButton aria-label="Hide"><EyeShape /></LegendButton>
                  <LegendButton aria-label="Format"><GearShape size={14} color="#000" hole="#2b2b2b" /></LegendButton>
                </LegendIcons>
              </Legend>
              <Legend $top={9} $left={465}>
                <Quote>시<b>147.19</b></Quote>
                <Quote>고<b>149.46</b></Quote>
                <Quote>저<b>144.54</b></Quote>
                <Quote>종<b>145.14</b></Quote>
              </Legend>
            </Plot>
            <Axis>
              {GRID_PRICES.map((p) => (
                <AxisLabel key={p} $fg="#4e4e4e" style={{ top: priceTop(p) }}>{p.toFixed(2)}</AxisLabel>
              ))}
              {PLACED_TAGS.map((t) => (
                <AxisLabel key={t.price} $bg={t.bg} $fg={t.fg} $bold={t.bold} style={{ top: t.top }}>{t.price.toFixed(2)}</AxisLabel>
              ))}
            </Axis>
          </PaneRow>
          <Divider />
          <PaneRow $height={90}>
            <Plot>
              <VolumePlot />
              <Legend $top={6} $left={6}>
                <LegendTitle $size={16}>거래량 (20)</LegendTitle>
                <Caret $light />
                <LegendIcons>
                  <LegendButton aria-label="Hide"><EyeShape /></LegendButton>
                  <LegendButton aria-label="Format"><GearShape size={14} color="#000" hole="#2b2b2b" /></LegendButton>
                  <LegendButton aria-label="Remove">
                    <svg width="12" height="12" viewBox="0 0 12 12" stroke="#000" strokeWidth="2" aria-hidden="true"><path d="M1 1L11 11M11 1L1 11" /></svg>
                  </LegendButton>
                </LegendIcons>
                <VolumeValue>1.42M</VolumeValue>
              </Legend>
            </Plot>
            <Axis>
              <AxisLabel $fg="#4e4e4e" style={{ top: 7 }}>8M</AxisLabel>
              <AxisLabel $fg="#4e4e4e" style={{ top: 85 }}>0</AxisLabel>
              <AxisLabel $fg="#e6e6e6" $bold style={{ top: 52 }}>1.617M</AxisLabel>
              <AxisLabel $fg="#fff" $bg="#2222bc" $bold style={{ top: 72 }}>1.42M</AxisLabel>
            </Axis>
          </PaneRow>
          <PaneRow $height={24}>
            <AxisRule>
              {TIMES.map(([x, label, solid]) => (
                <TimeTag key={label} $solid={solid} style={timeLeft(x)}>{label}</TimeTag>
              ))}
              <TimeNote style={timeLeft(563)}>21</TimeNote>
              {VERTICALS.map((x) => <TimeTick key={x} $dark style={timeLeft(x)} />)}
              {[885, 1427, 1610].map((x) => <TimeTick key={x} style={timeLeft(x)} />)}
            </AxisRule>
            <AxisCorner />
          </PaneRow>
          <Footer>
            <FooterButton $w={55}>10y</FooterButton>
            <FooterButton $w={48}>1y</FooterButton>
            <FooterButton $w={52}>1m</FooterButton>
            <FooterButton $w={55}>7일</FooterButton>
            <FooterButton $w={54}>1일</FooterButton>
            <FooterButton $w={82} $last>Go to...</FooterButton>
            <Spacer />
            <FooterButton $w={144}>13:21:09 <span>(UTC+9)</span></FooterButton>
            <FooterButton $w={42} $plain>%</FooterButton>
            <FooterButton $w={87} $plain>로그눈금</FooterButton>
            <FooterButton $w={60} $plain>자동</FooterButton>
            <FooterButton $w={50} $last aria-label="Properties"><SunGearIcon /></FooterButton>
          </Footer>
        </ChartFrame>
      </Main>
      <EdgeStrip />
    </Page>
  );
}
